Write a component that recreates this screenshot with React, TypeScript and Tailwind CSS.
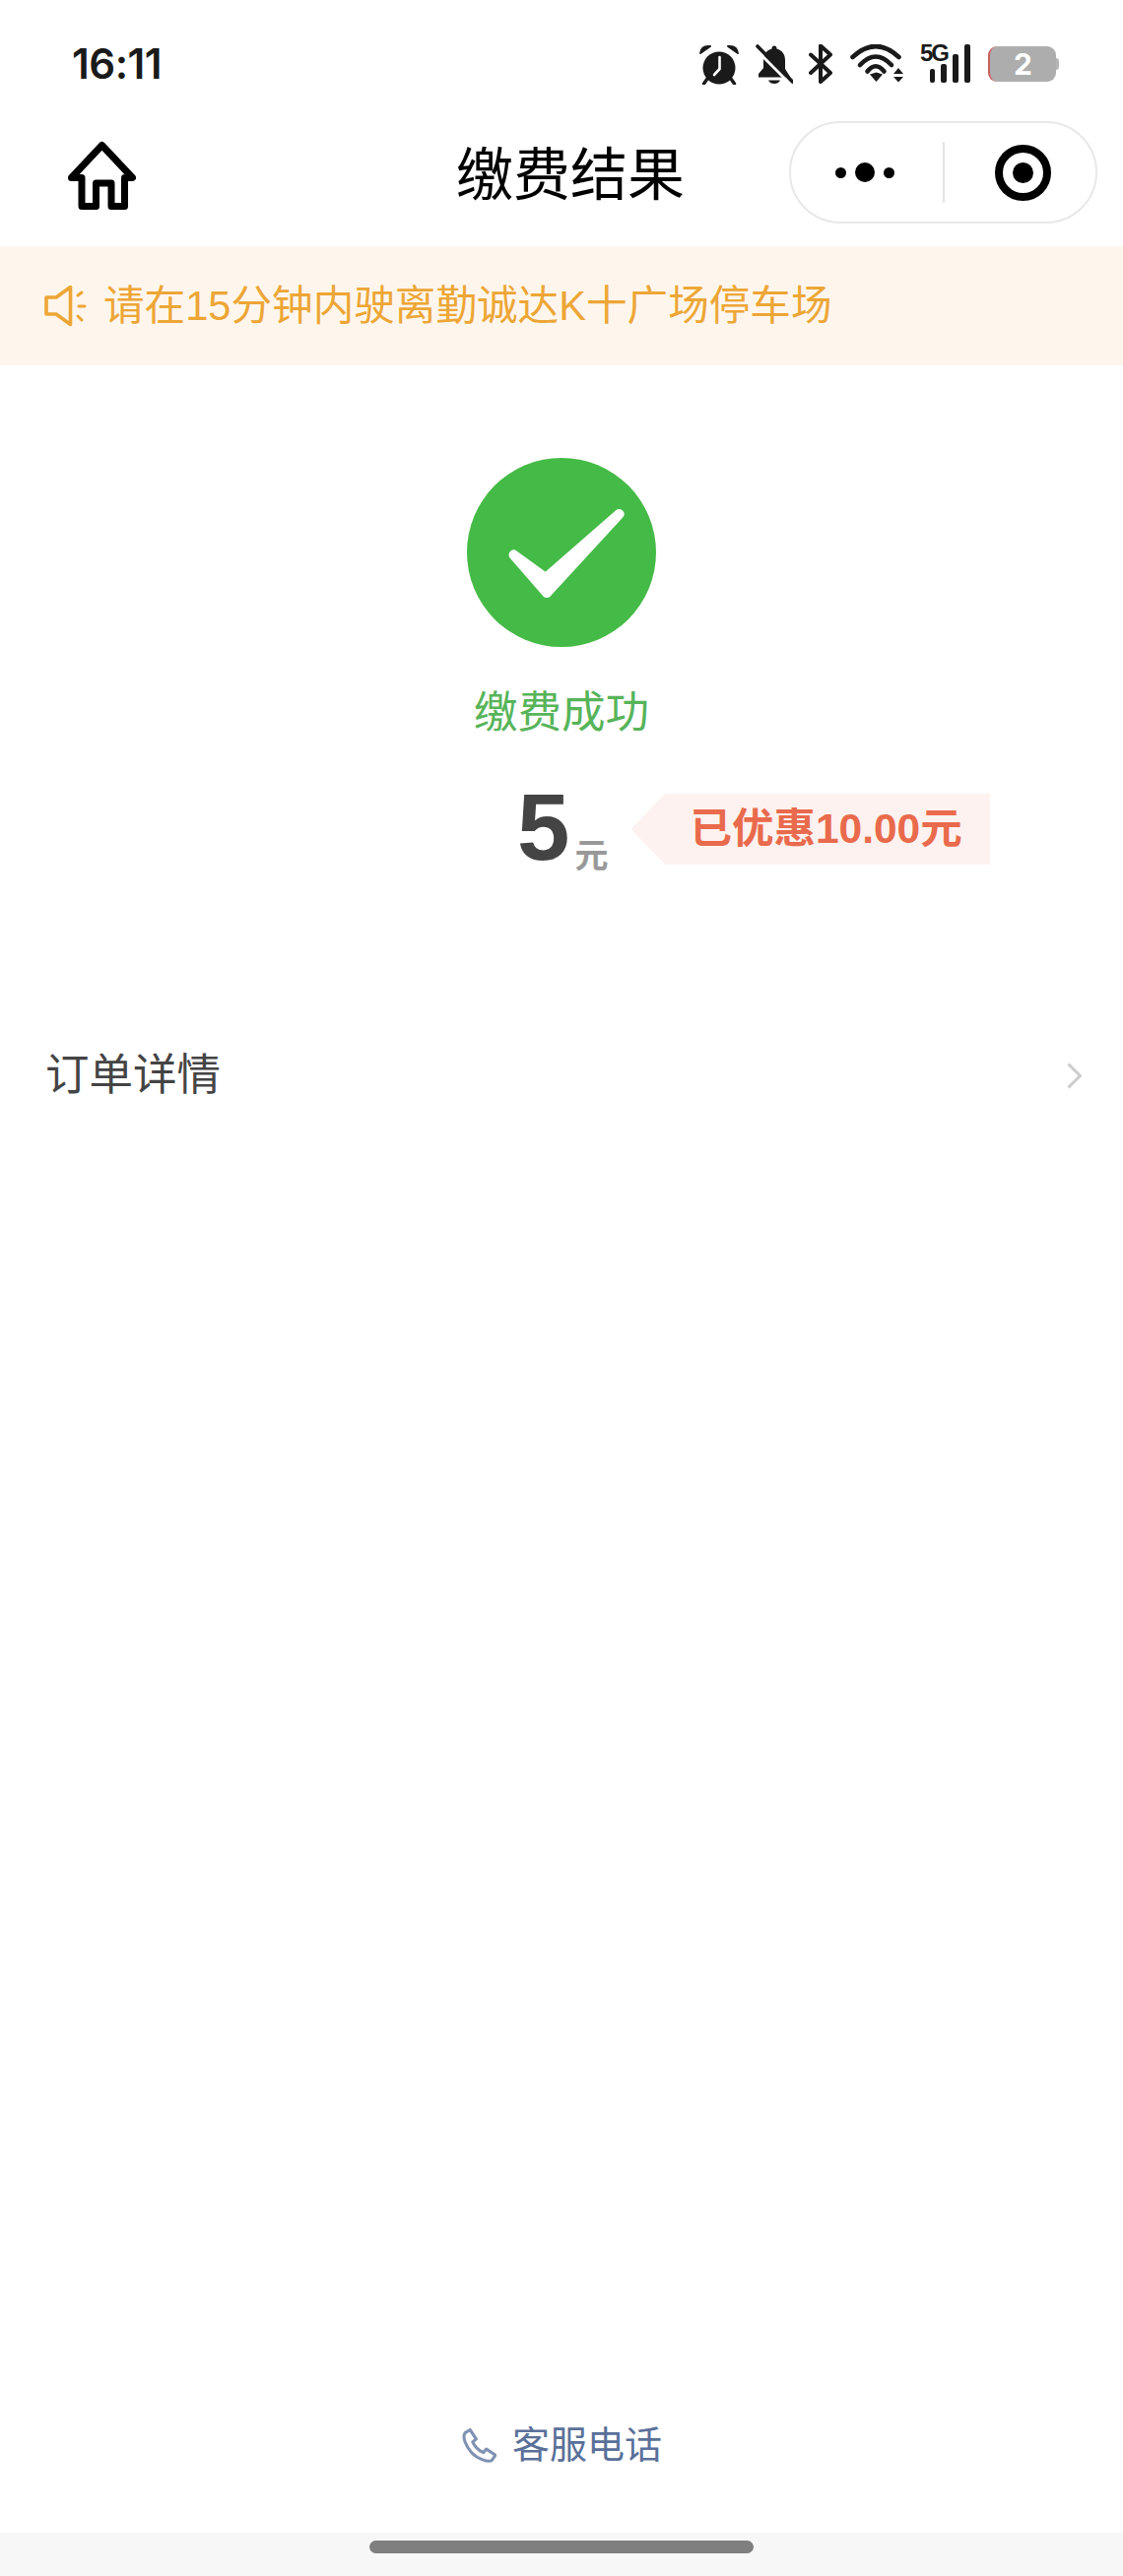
const sans = "font-['Liberation_Sans','Noto_Sans_CJK_SC',sans-serif]";

function StatusIcons() {
  return (
    <div className="ml-auto mr-[65px] mt-[45px] flex items-start">
      <svg className="block w-[40px] h-[41px]" viewBox="710 45 40 41" fill="none">
        <circle cx="730" cy="69" r="16.5" fill="#1a1a1a" />
        <path d="M730.5 58V70L725 76" stroke="#fff" strokeWidth="2.6" strokeLinecap="round" strokeLinejoin="round" />
        <path d="M711 54Q712 46 721 47Z M749 54Q748 46 739 47Z" fill="#1a1a1a" stroke="#1a1a1a" strokeWidth="2" strokeLinejoin="round" />
        <path d="M718 80L714.5 85M742 80L745.5 85" stroke="#1a1a1a" strokeWidth="3.4" strokeLinecap="round" />
      </svg>
      <svg className="block ml-[17px] w-[38px] h-[40px]" viewBox="767 45 38 40" fill="none">
        <path d="M786 46.5C788 46.5 788.5 48 788.5 49.5C794 51 797 55.5 797 61V70L802.5 78.5H770V75L775 69V61C775 55.5 778 51 783.5 49.5C783.5 48 784 46.5 786 46.5Z" fill="#1a1a1a" />
        <path d="M780 81.5H792C791 84 788.5 85 786 85C783.5 85 781 84 780 81.5Z" fill="#1a1a1a" />
        <path d="M766 49L802 85" stroke="#fff" strokeWidth="3" />
        <path d="M769 47L804.5 83" stroke="#1a1a1a" strokeWidth="3.6" strokeLinecap="round" />
      </svg>
      <svg className="block ml-[16px] w-[24px] h-[40px]" viewBox="821 46 24 40" fill="none">
        <path d="M823 56.5L843 75L833 84V47.5L843 56.5L823 75" stroke="#1a1a1a" strokeWidth="4" strokeLinecap="round" strokeLinejoin="round" />
      </svg>
      <svg className="block ml-[18px] w-[57px] h-[39px]" viewBox="863 45 57 39" fill="none">
        <path d="M865.5 58Q889 36 912.5 58" stroke="#1a1a1a" strokeWidth="4.6" strokeLinecap="round" />
        <path d="M873 66Q889 49 905 66" stroke="#1a1a1a" strokeWidth="4.6" strokeLinecap="round" />
        <path d="M880.5 72.5Q889 62 897.5 72.5" stroke="#1a1a1a" strokeWidth="4.6" strokeLinecap="round" />
        <path d="M883 75.5L889.5 73.5L896 75.5L889.5 83Z" fill="#1a1a1a" />
        <path d="M907 75L912 69L917 75Z M907 78L912 83.5L917 78Z" fill="#1a1a1a" />
      </svg>
      <div className="relative ml-[14px] w-[51px] h-[39px] flex items-end gap-[6px] pl-[10px]">
        <span className="absolute left-0 top-[-2px] text-[24px] leading-[22px] font-bold tracking-[-2px] text-[#1a1a1a] font-['Liberation_Sans',sans-serif]">5G</span>
        <i className="block w-[5.5px] h-[14px] rounded-[2px] bg-[#1a1a1a]" />
        <i className="block w-[6px] h-[19px] rounded-[2px] bg-[#1a1a1a]" />
        <i className="block w-[6px] h-[29px] rounded-[2px] bg-[#1a1a1a]" />
        <i className="block w-[6px] h-[39px] rounded-[2px] bg-[#1a1a1a]" />
      </div>
      <div className="ml-[18px] mt-[2px] flex items-center">
        <div className="w-[69px] h-[36px] rounded-[9px] bg-[#adadad] border-l-[2px] border-[#c8605e] flex items-center justify-center font-['Inter',sans-serif] text-[30px] leading-[36px] font-bold text-white">2</div>
        <div className="w-[3px] h-[12px] rounded-r-[3px] bg-[#b5b5b5]" />
      </div>
    </div>
  );
}

export default function App() {
  return (
    <div className={`${sans} w-[1140px] h-[2616px] flex flex-col bg-white overflow-hidden`}>
      <div className="h-[115px] shrink-0 flex items-start">
        <div className="ml-[73px] mt-[44px] font-['Inter',sans-serif] font-semibold text-[42px] leading-[42px] tracking-[-0.5px] text-[#1a1a1a]">16:11</div>
        <StatusIcons />
      </div>

      <div className="h-[135px] shrink-0 flex items-start">
        <svg className="block ml-[69px] mt-[28px] w-[69px] h-[70px]" viewBox="69 143 69 70" fill="none">
          <path d="M103.5 147.5L134.5 180.5H126.5V209.5H113V186H97.5V209.5H83V180.5H72.5Z" stroke="#000" strokeWidth="7" strokeLinejoin="round" />
        </svg>
        <div className="ml-[325px] mt-[31px] text-[58px] leading-[64px] text-black">缴费结果</div>
        <div className="ml-auto mr-[26px] mt-[8px] w-[313px] h-[104px] rounded-full border-2 border-[#e8e8e8] flex items-center">
          <div className="w-[154px] flex items-center gap-[9px] pl-[45px]">
            <i className="block w-[11px] h-[11px] rounded-full bg-black" />
            <i className="block w-[20px] h-[20px] rounded-full bg-black" />
            <i className="block w-[11px] h-[11px] rounded-full bg-black" />
          </div>
          <div className="w-[2px] h-[62px] bg-[#e4e4e4]" />
          <div className="flex-1 flex justify-center pl-[6px]">
            <div className="w-[57px] h-[57px] rounded-full border-[8px] border-black flex items-center justify-center">
              <i className="block w-[21px] h-[21px] rounded-full bg-black" />
            </div>
          </div>
        </div>
      </div>

      <div className="h-[121px] shrink-0 bg-[#fef6ed] flex items-center pl-[45px] text-[#eda636]">
        <svg className="block w-[43px] h-[42px]" viewBox="45 289 43 42" fill="none">
          <path d="M47 301H57L71.5 290.5V328.5L57 318H47Z" stroke="#eda636" strokeWidth="3.6" strokeLinejoin="round" />
          <path d="M79 299L83 296M80 310H86M79 320L83 324" stroke="#eda636" strokeWidth="3" strokeLinecap="round" />
        </svg>
        <div className="ml-[17px] text-[41.6px] leading-[50px] whitespace-nowrap">请在15分钟内驶离勤诚达K十广场停车场</div>
      </div>

      <div className="flex flex-col items-center pt-[94px]">
        <svg className="block w-[192px] h-[192px]" viewBox="474 465 192 192">
          <circle cx="570" cy="561" r="96" fill="#45bb47" />
          <path d="M521.5 563.5L554 587L628.5 522L555 602Z" fill="#fff" stroke="#fff" strokeWidth="10" strokeLinejoin="round" />
        </svg>
        <div className="mt-[40px] text-[44.5px] leading-[54px] text-[#57b45a]">缴费成功</div>
      </div>

      <div className="mt-[44px] h-[90px] flex items-start pl-[525px]">
        <div className="text-[96px] leading-[90px] font-bold text-[#444444]">5</div>
        <div className="ml-[5px] mt-[54px] text-[34px] leading-[40px] font-semibold text-[#999999]">元</div>
        <div className="ml-[23px] mt-[11px] w-[365px] h-[72px] flex items-center pl-[60px] bg-[#fdf2ef] [clip-path:polygon(0_50%,35px_0,100%_0,100%_100%,35px_100%)] text-[42.5px] leading-[50px] font-bold text-[#e96a4c] whitespace-nowrap">已优惠10.00元</div>
      </div>

      <div className="mt-[179px] h-[56px] flex items-center pl-[46px] pr-[42px] justify-between">
        <div className="text-[44.5px] leading-[56px] text-[#444444]">订单详情</div>
        <svg className="block w-[15px] h-[27px]" viewBox="0 0 15 27" fill="none">
          <path d="M1.5 1.5L13.5 13.5L1.5 25.5" stroke="#cccccc" strokeWidth="3" />
        </svg>
      </div>

      <div className="flex-1" />

      <div className="h-[50px] flex items-center justify-center pl-[1px] mb-[64px]">
        <svg className="block w-[35px] h-[35px]" viewBox="0 0 34 34" fill="none">
          <path d="M3 4.5L8 1.5L14 10.5L10.5 13.5C12.5 18 16.5 22 21 24L24 20.5L33 26.5L29.5 31.5C26 34 15 30 9.5 24C4 18 0 9 3 4.5Z" stroke="#7f92b3" strokeWidth="3" strokeLinejoin="round" />
        </svg>
        <div className="ml-[16px] text-[38px] leading-[50px] text-[#5a7099]">客服电话</div>
      </div>

      <div className="h-[44px] shrink-0 bg-[#f7f7f7] flex justify-center pt-[8px]">
        <div className="w-[390px] h-[13px] rounded-full bg-[#7f7f7f]" />
      </div>
    </div>
  );
}
